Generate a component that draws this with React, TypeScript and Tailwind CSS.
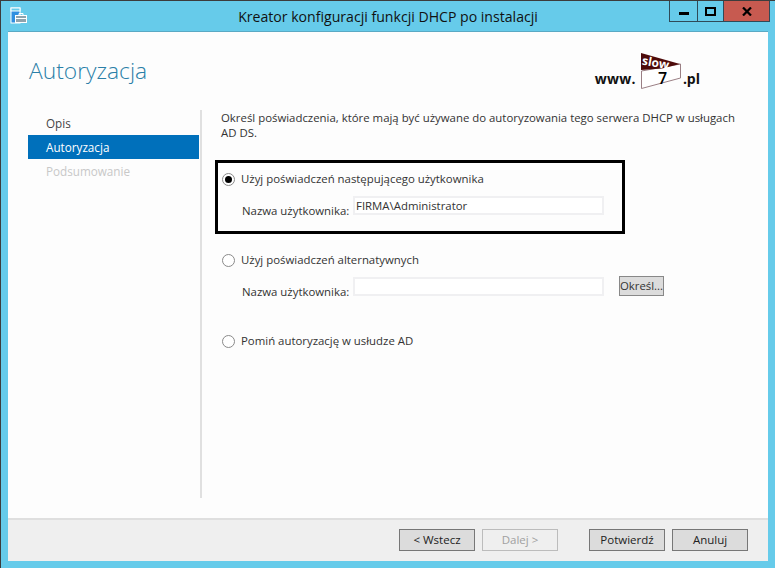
const font = "font-['Open_Sans','Noto_Sans',sans-serif]"

function ServerIcon() {
  return (
    <svg width="18" height="17" viewBox="0 0 18 17" className="shrink-0">
      <rect x="1" y="1" width="9" height="15" fill="#2f8fe0" stroke="#fff" />
      <rect x="1" y="1" width="9" height="3" fill="#66cbea" stroke="#fff" />
      <rect x="5.5" y="8.5" width="11" height="7" fill="#8fa3ad" stroke="#fff" />
      <path d="M9 8.5V6.5h4v2M5.5 11.5h11" fill="none" stroke="#fff" />
    </svg>
  )
}

function WindowButtons() {
  return (
    <div className="flex h-[21px] border-b border-l border-r border-[#2f4a58]">
      <div className="flex w-[28px] items-center justify-center border-r border-[#2f4a58]">
        <div className="mt-[5px] h-[3px] w-[10px] bg-black" />
      </div>
      <div className="flex w-[26px] items-center justify-center border-r border-[#2f4a58]">
        <div className="h-[9px] w-[11px] border-2 border-black" />
      </div>
      <div className="flex w-[45px] items-center justify-center bg-[#c75a50]">
        <svg width="10" height="9" viewBox="0 0 10 9">
          <path d="M1 .5 9 8.5M9 .5 1 8.5" stroke="#000" strokeWidth="2.2" fill="none" />
        </svg>
      </div>
    </div>
  )
}

function Logo() {
  return (
    <div className="relative mt-[-5px] flex h-[36px] w-[40px] shrink-0 items-center justify-center">
      <svg width="40" height="36" viewBox="0 0 40 36" className="absolute left-0 top-0">
        <path d="M0.5 18 L39.5 11 V25 L0.5 35.5 Z" fill="#fff" stroke="#9a7f84" />
        <path d="M0 0 L39 11 L21 15.5 L0 17 Z" fill="#4d0a0a" />
      </svg>
      <span className="absolute left-[1px] top-[4px] rotate-[10deg] text-[12px] font-bold leading-none text-white">slow</span>
      <span className="absolute left-[17px] top-[17px] text-[16px] font-semibold leading-none text-black">7</span>
    </div>
  )
}

function Radio({ checked, label }: { checked?: boolean; label: string }) {
  return (
    <div className="flex h-[20px] items-center">
      <div className="flex h-[13px] w-[13px] shrink-0 items-center justify-center rounded-full border border-[#8a8a8a] bg-white">
        {checked && <div className="h-[7px] w-[7px] rounded-full bg-black" />}
      </div>
      <span className="ml-[6px] text-[11.4px] text-[#333]">{label}</span>
    </div>
  )
}

function UserRow({ value }: { value?: string }) {
  return (
    <div className="flex h-[19px] items-start pl-[20px]">
      <span className="mt-[7px] w-[111px] shrink-0 text-[11.4px] leading-[15px] text-[#333]">Nazwa użytkownika:</span>
      <div className="h-[19px] w-[251px] border-2 border-[#f0f0f2] bg-white pl-[1px] text-[11.4px] leading-[15px] text-[#333]">
        {value}
      </div>
    </div>
  )
}

function FooterButton({ label, disabled }: { label: string; disabled?: boolean }) {
  return (
    <div
      className={
        disabled
          ? "flex h-[22px] w-[76px] items-center justify-center border border-[#bcbcbc] bg-[#efefef] text-[11.5px] text-[#a0a0a0]"
          : "flex h-[22px] w-[76px] items-center justify-center border border-[#777] bg-[#dcdcdc] text-[11.5px] text-[#222]"
      }
    >
      {label}
    </div>
  )
}

export default function App() {
  return (
    <div className={`flex h-[568px] w-[775px] flex-col overflow-hidden border-l border-t border-[#3c3c3c] bg-[#66cbea] ${font}`}>
      <div className="grid h-[30px] shrink-0 grid-cols-[1fr_auto_1fr] items-start">
        <div className="ml-[9px] mt-[6px]">
          <ServerIcon />
        </div>
        <div className="pt-[6px] text-center text-[14.1px] leading-[19px] text-[#111]">
          Kreator konfiguracji funkcji DHCP po instalacji
        </div>
        <div className="mr-[5px] justify-self-end">
          <WindowButtons />
        </div>
      </div>

      <div className="ml-[7px] flex h-[530px] w-[760px] flex-col border-t border-[#5aa9c4] bg-[#fdfdfd]">
        <div className="flex h-[78px] shrink-0 items-start pl-[21px] pt-[24px]">
          <div className="text-[22.8px] font-light leading-[30px] text-[#2a7fa8]">Autoryzacja</div>
          <div className="ml-auto mr-[68px] mt-[1px] flex items-center text-[14px] font-bold text-[#111]">
            <span className="mr-[5px] mt-[11px] tracking-[0.3px]">www.</span>
            <Logo />
            <span className="ml-[2px] mt-[11px]">.pl</span>
          </div>
        </div>

        <div className="flex h-[388px] shrink-0">
          <div className="ml-[20px] flex w-[171px] shrink-0 flex-col pt-[1px] text-[11.7px]">
            <div className="flex h-[24px] items-center pl-[18px] pt-[2px] text-[#444]">Opis</div>
            <div className="flex h-[24px] items-center bg-[#0070bb] pl-[18px] pt-[2px] text-white">Autoryzacja</div>
            <div className="flex h-[24px] items-center pl-[18px] pt-[2px] text-[#c8c8c8]">Podsumowanie</div>
          </div>
          <div className="ml-[1px] h-full w-[2px] shrink-0 bg-[#e0e0e0]" />
          <div className="flex flex-1 flex-col pl-[13px]">
            <p className="ml-[6px] w-[525px] text-[11.4px] leading-[15px] text-[#333]">
              Określ poświadczenia, które mają być używane do autoryzowania tego serwera DHCP w usługach AD DS.
            </p>
            <div className="mt-[20px] h-[74px] w-[410px] border-[3px] border-black pl-[4px] pt-[6px]">
              <Radio checked label="Użyj poświadczeń następującego użytkownika" />
              <div className="mt-[7px]">
                <UserRow value="FIRMA\Administrator" />
              </div>
            </div>
            <div className="ml-[7px] mt-[16px]">
              <Radio label="Użyj poświadczeń alternatywnych" />
              <div className="mt-[6px] flex items-center">
                <UserRow />
                <div className="ml-[15px] flex h-[20px] w-[45px] items-center justify-center border border-[#888] bg-[#dcdcdc] text-[11.4px] text-[#333]">
                  Określ...
                </div>
              </div>
            </div>
            <div className="ml-[7px] mt-[35px]">
              <Radio label="Pomiń autoryzację w usłudze AD" />
            </div>
          </div>
        </div>

        <div className="mt-[20px] flex flex-1 items-start border-t-2 border-[#dfdfdf] bg-[#efefef] pl-[391px] pt-[9px]">
          <FooterButton label="< Wstecz" />
          <div className="ml-[7px]">
            <FooterButton label="Dalej >" disabled />
          </div>
          <div className="ml-[31px]">
            <FooterButton label="Potwierdź" />
          </div>
          <div className="ml-[7px]">
            <FooterButton label="Anuluj" />
          </div>
        </div>
      </div>
    </div>
  )
}
